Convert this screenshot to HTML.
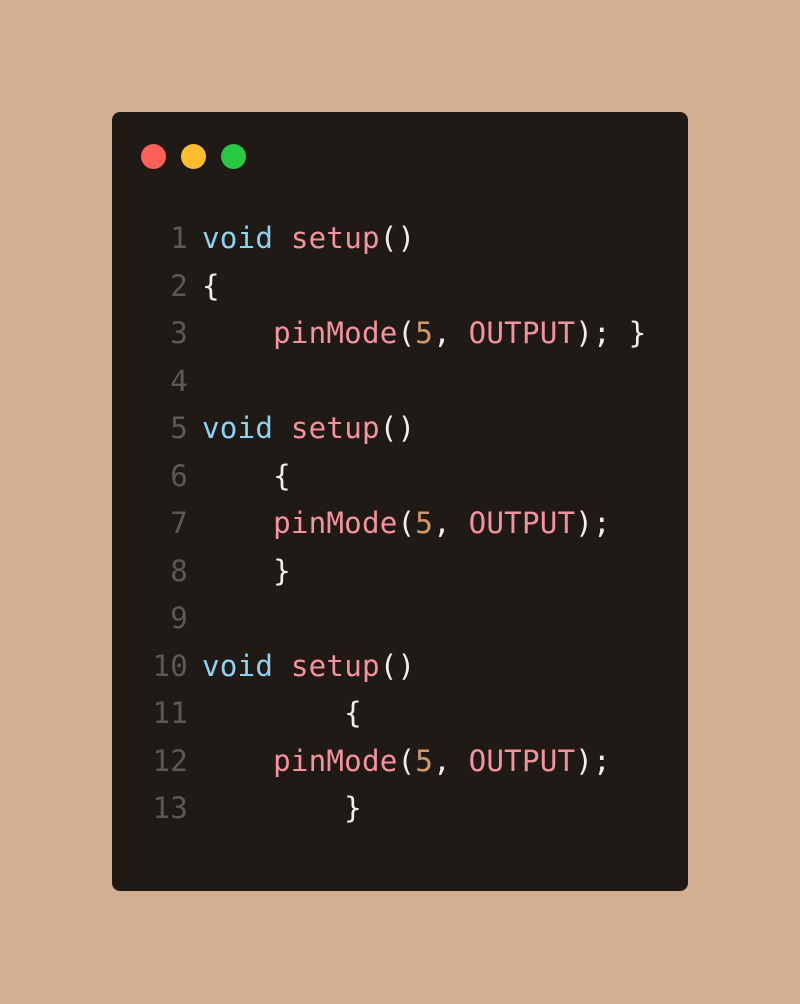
<!DOCTYPE html>
<html><head><style>
body{margin:0;width:800px;height:1004px;background:#d3af94;position:relative;overflow:hidden}
.card{position:absolute;left:112px;top:112px;width:576px;height:779px;background:#201a17;border-radius:8px}
.dot{position:absolute;top:144px;width:25px;height:25px;border-radius:50%}
pre{position:absolute;left:140px;top:215px;margin:0;font-family:"DejaVu Sans Mono","Liberation Mono",monospace;font-size:29.2px;line-height:47.5px;color:#f3efe8;letter-spacing:0.2px}
.n{color:#5e5855;display:inline-block;width:48px;text-align:right;margin-right:14px}
.k{color:#8fd3f2}.f{color:#f4939b}.d{color:#d19b68}
</style></head><body>
<div class="card"></div>
<div class="dot" style="left:141px;background:#fe5f57"></div>
<div class="dot" style="left:181px;background:#febc2e"></div>
<div class="dot" style="left:221px;background:#28c840"></div>
<pre><span class="n">1</span><span class="k">void</span> <span class="f">setup</span>()
<span class="n">2</span>{
<span class="n">3</span>    <span class="f">pinMode</span>(<span class="d">5</span>, <span class="f">OUTPUT</span>); }
<span class="n">4</span>
<span class="n">5</span><span class="k">void</span> <span class="f">setup</span>()
<span class="n">6</span>    {
<span class="n">7</span>    <span class="f">pinMode</span>(<span class="d">5</span>, <span class="f">OUTPUT</span>);
<span class="n">8</span>    }
<span class="n">9</span>
<span class="n">10</span><span class="k">void</span> <span class="f">setup</span>()
<span class="n">11</span>        {
<span class="n">12</span>    <span class="f">pinMode</span>(<span class="d">5</span>, <span class="f">OUTPUT</span>);
<span class="n">13</span>        }</pre>
</body></html>
